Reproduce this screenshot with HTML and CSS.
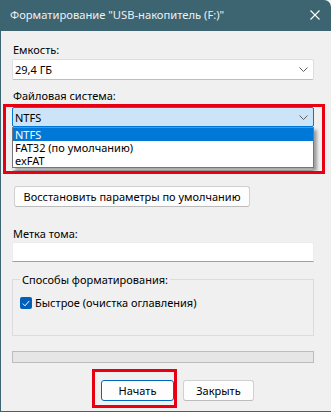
FILE: index.html
```html
<!DOCTYPE html>
<html lang="ru">
<head>
    <meta charset="UTF-8">
    <meta name="viewport" content="width=device-width, initial-scale=1.0">
    <title>Форматирование</title>
    <link rel="stylesheet" href="styles.css">
</head>
<body>

    <div class="window">
        <!-- Title bar -->
        <div class="titlebar">
            <span class="title">Форматирование "USB-накопитель (F:)"</span>
            <svg class="close" width="10" height="10" viewBox="0 0 10 10">
                <path d="M0.5 0.5 L9.5 9.5 M9.5 0.5 L0.5 9.5" stroke="#ffffff" stroke-width="1.1" fill="none"/>
            </svg>
        </div>

        <div class="content">
            <div class="label first">Емкость:</div>
            <div class="combo">
                <span>29,4 ГБ</span>
                <svg class="chevron" width="9" height="5" viewBox="0 0 9 5"><path d="M0.5 0.5 L4.5 4.5 L8.5 0.5" stroke="#5c5c5c" fill="none"/></svg>
            </div>

            <div class="label">Файловая система:</div>
            <div class="fs-wrap">
                <div class="combo combo-open">
                    <span>NTFS</span>
                    <svg class="chevron" width="9" height="5" viewBox="0 0 9 5"><path d="M0.5 0.5 L4.5 4.5 L8.5 0.5" stroke="#5c5c5c" fill="none"/></svg>
                </div>
                <!-- cluster size row, covered by the open list -->
                <div class="spacer"></div>
                <div class="combo combo-under"></div>

                <div class="dropdown">
                    <div class="option selected">NTFS</div>
                    <div class="option">FAT32 (по умолчанию)</div>
                    <div class="option">exFAT</div>
                </div>
                <div class="mark mark-fs"></div>
            </div>

            <button class="btn btn-restore">Восстановить параметры по умолчанию</button>

            <div class="label label-volume">Метка тома:</div>
            <div class="textbox"></div>

            <fieldset class="group">
                <legend>Способы форматирования:</legend>
                <label class="check">
                    <span class="box">
                        <svg width="8" height="7" viewBox="0 0 8 7"><path d="M0.8 3.6 L3 5.8 L7.2 1" stroke="#ffffff" stroke-width="1" fill="none"/></svg>
                    </span>
                    Быстрое (очистка оглавления)
                </label>
            </fieldset>

            <div class="progress"></div>

            <div class="actions">
                <div class="start-wrap">
                    <button class="btn btn-default">Начать</button>
                    <div class="mark mark-start"></div>
                </div>
                <button class="btn btn-close">Закрыть</button>
            </div>
        </div>
    </div>

</body>
</html>
```

FILE: styles.css
```css
/* General */
body {
    margin: 0;
    font-family: "Noto Sans", "Open Sans", sans-serif;
    font-size: 11px;
    color: rgb(0, 0, 0);
    background-color: rgb(243, 243, 243);
    overflow: hidden;
}

.window {
    height: 100vh;
    box-sizing: border-box;
    border-left: 1px solid rgb(61, 100, 113);
    border-bottom: 1px solid rgb(61, 100, 113);
    border-top-right-radius: 7px;
    background-color: rgb(240, 240, 240);
    overflow: hidden;
}

/* Title bar */
.titlebar {
    height: 31px;
    background-color: rgb(61, 100, 113);
    color: rgb(236, 241, 243);
    display: flex;
    align-items: center;
    justify-content: space-between;
    padding: 0 11px 2px 9px;
    box-sizing: border-box;
}

.title {
    font-size: 11.2px;
}

.close {
    display: block;
}

/* Content */
.content {
    padding: 0 17px 0 11px;
}

.label {
    line-height: 15px;
    margin-top: 8px;
    padding-left: 1px;
}

.label.first {
    margin-top: 11px;
}

.combo {
    margin-top: 2px;
    height: 21px;
    box-sizing: border-box;
    background-color: rgb(255, 255, 255);
    border: 1px solid rgb(222, 222, 222);
    border-bottom-color: rgb(190, 190, 190);
    border-radius: 2px;
    display: flex;
    align-items: center;
    justify-content: space-between;
    padding: 0 5px 0 2px;
}

.chevron {
    display: block;
}

/* File system block */
.fs-wrap {
    position: relative;
    margin-top: 4px;
}

.combo-open {
    margin-top: 0;
    height: 20px;
    background-color: rgb(204, 228, 247);
    border-color: rgb(0, 120, 215);
}

.spacer {
    height: 15px;
    margin-top: 6px;
}

.combo-under {
    margin-top: 2px;
}

.dropdown {
    position: absolute;
    top: 20px;
    left: 0;
    right: 0;
    background-color: rgb(255, 255, 255);
    border: 1px solid rgb(118, 118, 118);
    border-top-color: rgb(130, 135, 144);
    box-shadow: 3px 3px 3px rgba(0, 0, 0, 0.35);
}

.option {
    line-height: 13px;
    padding-left: 2px;
}

.option.selected {
    background-color: rgb(0, 120, 215);
    color: rgb(255, 255, 255);
}

/* Red annotation frames */
.mark {
    position: absolute;
    border: 3px solid rgb(232, 0, 18);
    box-sizing: border-box;
    pointer-events: none;
}

.mark-fs {
    top: -3px;
    left: -9px;
    width: 322px;
    height: 70px;
}

.mark-start {
    top: -11px;
    left: -9px;
    right: -3px;
    bottom: -7px;
}

/* Buttons */
.btn {
    display: block;
    height: 21px;
    box-sizing: border-box;
    font-family: inherit;
    font-size: 11px;
    color: rgb(0, 0, 0);
    background-color: rgb(253, 253, 253);
    border: 1px solid rgb(208, 208, 208);
    border-bottom-color: rgb(188, 188, 188);
    border-radius: 3px;
    padding: 0;
    white-space: nowrap;
}

.btn-restore {
    margin-top: 15px;
    margin-left: 2px;
    width: 236px;
}

.label-volume {
    margin-top: 19px;
}

.textbox {
    margin-top: 1px;
    height: 20px;
    box-sizing: border-box;
    background-color: rgb(255, 255, 255);
    border: 1px solid rgb(236, 236, 236);
    border-bottom-color: rgb(160, 160, 160);
}

/* Group box */
.group {
    margin: 10px 0 0;
    padding: 10px 7px 26px;
    border: 1px solid rgb(220, 220, 220);
}

.group legend {
    padding: 0 2px;
    line-height: 15px;
}

.check {
    display: flex;
    align-items: center;
    line-height: 12px;
    gap: 3px;
}

.box {
    width: 12px;
    height: 12px;
    border-radius: 2px;
    background-color: rgb(0, 95, 184);
    display: flex;
    align-items: center;
    justify-content: center;
}

.box svg {
    display: block;
}

/* Progress bar */
.progress {
    margin-top: 15px;
    height: 12px;
    box-sizing: border-box;
    background-color: rgb(230, 230, 230);
    border: 1px solid rgb(188, 188, 188);
}

/* Bottom buttons */
.actions {
    margin-top: 17px;
    padding-left: 89px;
    display: flex;
    gap: 9px;
}

.start-wrap {
    position: relative;
}

.btn-default {
    width: 73px;
    border: 1px solid rgb(0, 103, 192);
}

.btn-close {
    width: 71px;
}
```
